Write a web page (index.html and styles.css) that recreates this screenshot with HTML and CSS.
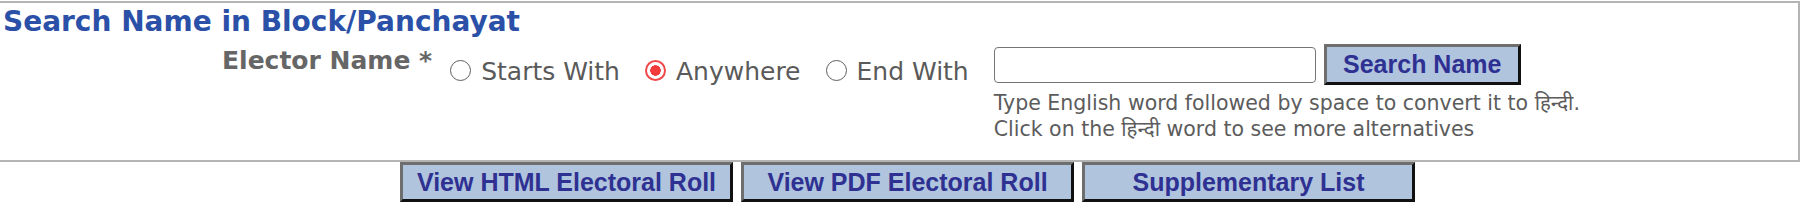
FILE: index.html
```html
<!DOCTYPE html>
<html>
<head>
    <meta charset="UTF-8">
    <title>Search Name in Block/Panchayat</title>
    <link rel="stylesheet" href="styles.css">
</head>
<body>
    <div class="panel">
        <h2 class="title">Search Name in Block/Panchayat</h2>
        <div class="search-row">
            <div class="field-label">Elector Name *</div>
            <div class="options">
                <label class="option"><input type="radio" name="match" value="start">Starts With</label>
                <label class="option"><input type="radio" name="match" value="any" checked>Anywhere</label>
                <label class="option"><input type="radio" name="match" value="end">End With</label>
            </div>
            <div class="field">
                <div class="field-line">
                    <input type="text" class="name-input" id="elector">
                    <button class="btn btn-search">Search Name</button>
                </div>
                <div class="hint">Type English word followed by space to convert it to हिन्दी.<br>Click on the हिन्दी word to see more alternatives</div>
            </div>
        </div>
    </div>

    <div class="actions">
        <button class="btn btn-roll">View HTML Electoral Roll</button>
        <button class="btn btn-roll">View PDF Electoral Roll</button>
        <button class="btn btn-roll">Supplementary List</button>
    </div>
</body>
</html>
```

FILE: styles.css
```css
body {
    margin: 0;
    padding-top: 1px;
    background-color: #ffffff;
    font-family: "DejaVu Sans", "Noto Sans Devanagari", "Noto Sans", sans-serif;
    color: #555555;
}

.panel {
    height: 157px;
    border: 2px solid #b4b4b4;
    border-left: none;
}

.title {
    margin: 0;
    padding: 3px 0 0 3px;
    font-size: 28px;
    line-height: 32px;
    font-weight: bold;
    color: #2b50a8;
}

.search-row {
    display: flex;
    align-items: flex-start;
    margin-top: 6px;
    padding-left: 222px;
}

.field-label {
    margin-top: 3px;
    font-size: 25px;
    line-height: 28px;
    font-weight: bold;
    color: #666666;
}

.options {
    display: flex;
    margin-top: 13px;
    margin-left: 18px;
}

.option {
    display: flex;
    align-items: center;
    margin-right: 25px;
    font-size: 25px;
    line-height: 30px;
    color: #5a5a5a;
}

.option input {
    appearance: none;
    -webkit-appearance: none;
    width: 21px;
    height: 21px;
    margin: 0 10px 4px 0;
    border: 1.5px solid #5e5e5e;
    border-radius: 50%;
    background-color: #ffffff;
}

.option input:checked {
    border: 2px solid #f04848;
    background: radial-gradient(circle, #f23b3b 0 5px, #ffffff 5.5px);
}

.field {
    display: flex;
    flex-direction: column;
}

.field-line {
    display: flex;
    align-items: flex-start;
}

.name-input {
    width: 322px;
    height: 36px;
    margin: 3px 8px 0 0;
    padding: 2px 6px;
    box-sizing: border-box;
    border: 1px solid #767676;
    border-radius: 4px;
    font-family: inherit;
    font-size: 20px;
}

.btn {
    box-sizing: border-box;
    margin: 0;
    border: 3px solid;
    border-color: #6e6e6e #111111 #111111 #6e6e6e;
    background-color: #b0c4de;
    color: #2e3192;
    font-family: "Liberation Sans", Arial, sans-serif;
    font-size: 25px;
    font-weight: bold;
    line-height: 29px;
    cursor: pointer;
}

.btn-search {
    width: 197px;
    height: 41px;
    padding: 3px 0;
}

.hint {
    margin-top: 5px;
    font-size: 20.5px;
    line-height: 26px;
    color: #5c5c5c;
}

.actions {
    display: flex;
    justify-content: center;
    gap: 8px;
    padding-left: 15px;
}

.btn-roll {
    width: 333px;
    height: 40px;
    padding: 2px 0;
}
```
